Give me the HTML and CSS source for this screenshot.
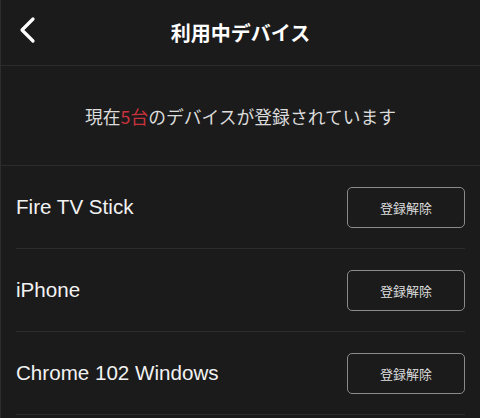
FILE: index.html
```html
<!DOCTYPE html>
<html lang="ja">
<head>
  <meta charset="UTF-8">
  <meta name="viewport" content="width=device-width, initial-scale=1.0">
  <title>利用中デバイス</title>
  <link rel="stylesheet" href="styles.css">
</head>
<body>
  <div class="screen">
    <header class="header">
      <button class="back" aria-label="戻る">
        <svg width="18" height="28" viewBox="0 0 18 28">
          <path d="M14 3 L3 14 L14 25" fill="none" stroke="#fff" stroke-width="3.2" stroke-linecap="round" stroke-linejoin="round"/>
        </svg>
      </button>
      <h1 class="title">利用中デバイス</h1>
    </header>

    <div class="summary">
      現在<span class="count">5台</span>のデバイスが登録されています
    </div>

    <ul class="devices">
      <li class="device">
        <span class="device-name">Fire TV Stick</span>
        <button class="btn-remove">登録解除</button>
      </li>
      <li class="device">
        <span class="device-name">iPhone</span>
        <button class="btn-remove">登録解除</button>
      </li>
      <li class="device">
        <span class="device-name">Chrome 102 Windows</span>
        <button class="btn-remove">登録解除</button>
      </li>
    </ul>
  </div>
</body>
</html>
```

FILE: styles.css
```css
html, body {
  margin: 0;
  padding: 0;
  background-color: #1b1b1b;
}

body {
  font-family: "Liberation Sans", "Noto Sans CJK JP", sans-serif;
  color: #f0f0f0;
}

.screen {
  min-height: 418px;
  border-left: 1px solid #2e2e2e;
  box-sizing: border-box;
}

.header {
  position: relative;
  height: 65px;
  display: flex;
  align-items: center;
  justify-content: center;
  border-bottom: 1px solid #2c2c2c;
}

.back {
  position: absolute;
  left: 18px;
  top: 16px;
  padding: 0;
  border: none;
  background: none;
  display: flex;
}

.title {
  margin: 0;
  font-size: 20px;
  font-weight: bold;
  color: #fff;
  font-family: "Noto Sans CJK JP", sans-serif;
}

.summary {
  height: 99px;
  display: flex;
  align-items: center;
  justify-content: center;
  font-family: "Noto Sans CJK JP", sans-serif;
  font-size: 17.8px;
  color: #dcdcdc;
  border-bottom: 1px solid #2c2c2c;
}

.count {
  color: #c8323c;
}

.devices {
  list-style: none;
  margin: 0;
  padding: 0 15px 0 15px;
}

.device {
  height: 82px;
  display: flex;
  align-items: center;
  justify-content: space-between;
  border-bottom: 1px solid #2c2c2c;
}

.device-name {
  font-size: 20.6px;
  color: #f2f2f2;
}

.btn-remove {
  width: 118px;
  height: 41px;
  background: transparent;
  border: 1.5px solid #8a8a8a;
  border-radius: 5px;
  color: #dedede;
  font-family: "Noto Sans CJK JP", sans-serif;
  font-size: 13px;
  cursor: pointer;
}
```
